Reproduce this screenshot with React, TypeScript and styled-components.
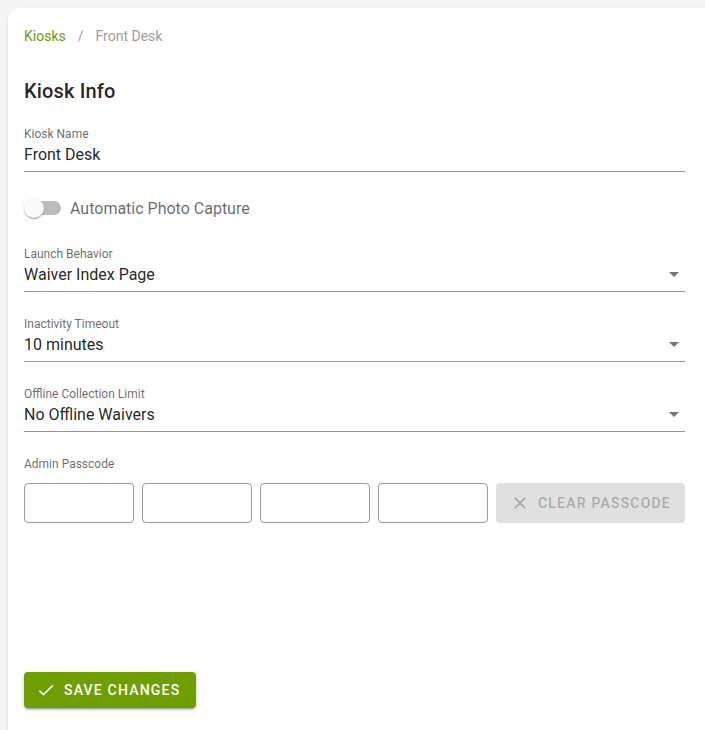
import React from "react";
import styled, { createGlobalStyle } from "styled-components";

const GlobalStyle = createGlobalStyle`
  html, body {
    margin: 0;
    padding: 0;
    background: #f5f5f5;
    font-family: Roboto, "Liberation Sans", Arial, sans-serif;
    color: rgba(0, 0, 0, 0.87);
  }
  * { box-sizing: border-box; }
`;

const Page = styled.div`
  padding: 8px 0 0 8px;
  min-height: 730px;
`;

const Card = styled.div`
  background: #fff;
  border-radius: 12px 0 0 0;
  box-shadow: 0 1px 3px rgba(0, 0, 0, 0.12);
  min-height: 740px;
  padding: 18px 20px 0 16px;
  display: flex;
  flex-direction: column;
`;

const Breadcrumbs = styled.div`
  display: flex;
  align-items: center;
  font-size: 14px;
  line-height: 20px;
  color: #9e9e9e;
`;

const Crumb = styled.span<{ $active?: boolean }>`
  color: ${(p) => (p.$active ? "#6c9e0a" : "#9e9e9e")};
`;

const Sep = styled.span`
  margin: 0 12px;
`;

const Title = styled.h2`
  margin: 31px 0 0;
  font-size: 20px;
  font-weight: 500;
  line-height: 28px;
  letter-spacing: 0.15px;
`;

const Field = styled.div<{ $top: number }>`
  margin-top: ${(p) => p.$top}px;
  border-bottom: 1px solid rgba(0, 0, 0, 0.42);
  padding-bottom: 4px;
  position: relative;
`;

const Label = styled.div`
  font-size: 12px;
  line-height: 16px;
  color: rgba(0, 0, 0, 0.6);
`;

const Value = styled.div`
  font-size: 16px;
  line-height: 24px;
  margin-top: 1px;
`;

const Arrow = styled.div`
  position: absolute;
  right: 6px;
  bottom: 14px;
  width: 0;
  height: 0;
  border-left: 5px solid transparent;
  border-right: 5px solid transparent;
  border-top: 5px solid rgba(0, 0, 0, 0.54);
`;

const SwitchRow = styled.div`
  display: flex;
  align-items: center;
  margin-top: 24px;
  height: 24px;
`;

const Track = styled.div`
  width: 34px;
  height: 14px;
  border-radius: 7px;
  background: #bdbdbd;
  position: relative;
  margin-left: 3px;
`;

const Thumb = styled.div`
  position: absolute;
  left: -3px;
  top: -3px;
  width: 20px;
  height: 20px;
  border-radius: 50%;
  background: #fafafa;
  box-shadow: 0 2px 1px -1px rgba(0, 0, 0, 0.2), 0 1px 1px rgba(0, 0, 0, 0.14),
    0 1px 3px rgba(0, 0, 0, 0.12);
`;

const SwitchLabel = styled.span`
  margin-left: 9px;
  font-size: 16px;
  color: rgba(0, 0, 0, 0.6);
`;

const PassLabel = styled.div`
  margin-top: 24px;
  font-size: 12px;
  line-height: 16px;
  color: rgba(0, 0, 0, 0.6);
`;

const PassRow = styled.div`
  display: grid;
  grid-template-columns: repeat(4, 110px) minmax(0, 1fr);
  gap: 8px;
  margin-top: 11px;
`;

const PassBox = styled.div`
  height: 40px;
  border: 1px solid rgba(0, 0, 0, 0.38);
  border-radius: 4px;
`;

const Button = styled.button<{ $disabled?: boolean }>`
  display: inline-flex;
  align-items: center;
  justify-content: center;
  gap: 8px;
  white-space: nowrap;
  height: ${(p) => (p.$disabled ? "40px" : "36px")};
  padding: ${(p) => (p.$disabled ? "0 8px" : "0 16px 0 12px")};
  border: none;
  border-radius: 4px;
  font-family: Roboto, "Liberation Sans", Arial, sans-serif;
  font-size: 14px;
  font-weight: 500;
  letter-spacing: 1.2px;
  text-transform: uppercase;
  background: ${(p) => (p.$disabled ? "#e0e0e0" : "#6f9e00")};
  color: ${(p) => (p.$disabled ? "rgba(0,0,0,0.26)" : "#fff")};
  box-shadow: ${(p) =>
    p.$disabled
      ? "none"
      : "0 3px 1px -2px rgba(0,0,0,0.2), 0 2px 2px rgba(0,0,0,0.14), 0 1px 5px rgba(0,0,0,0.12)"};
`;

const Footer = styled.div`
  margin-top: 149px;
`;

const XIcon = () => (
  <svg width="20" height="20" viewBox="0 0 24 24">
    <path
      d="M19 6.41 17.59 5 12 10.59 6.41 5 5 6.41 10.59 12 5 17.59 6.41 19 12 13.41 17.59 19 19 17.59 13.41 12z"
      fill="currentColor"
    />
  </svg>
);

const CheckIcon = () => (
  <svg width="20" height="20" viewBox="0 0 24 24">
    <path d="M9 16.17 4.83 12l-1.42 1.41L9 19 21 7l-1.41-1.41z" fill="currentColor" />
  </svg>
);

const selects = [
  { label: "Launch Behavior", value: "Waiver Index Page", top: 26 },
  { label: "Inactivity Timeout", value: "10 minutes", top: 24 },
  { label: "Offline Collection Limit", value: "No Offline Waivers", top: 24 },
];

export default function App() {
  return (
    <>
      <GlobalStyle />
      <Page>
        <Card>
          <Breadcrumbs>
            <Crumb $active>Kiosks</Crumb>
            <Sep>/</Sep>
            <Crumb>Front Desk</Crumb>
          </Breadcrumbs>
          <Title>Kiosk Info</Title>
          <Field $top={21}>
            <Label>Kiosk Name</Label>
            <Value>Front Desk</Value>
          </Field>
          <SwitchRow>
            <Track>
              <Thumb />
            </Track>
            <SwitchLabel>Automatic Photo Capture</SwitchLabel>
          </SwitchRow>
          {selects.map((s) => (
            <Field key={s.label} $top={s.top}>
              <Label>{s.label}</Label>
              <Value>{s.value}</Value>
              <Arrow />
            </Field>
          ))}
          <PassLabel>Admin Passcode</PassLabel>
          <PassRow>
            <PassBox />
            <PassBox />
            <PassBox />
            <PassBox />
            <Button $disabled>
              <XIcon />
              Clear Passcode
            </Button>
          </PassRow>
          <Footer>
            <Button>
              <CheckIcon />
              Save Changes
            </Button>
          </Footer>
        </Card>
      </Page>
    </>
  );
}
